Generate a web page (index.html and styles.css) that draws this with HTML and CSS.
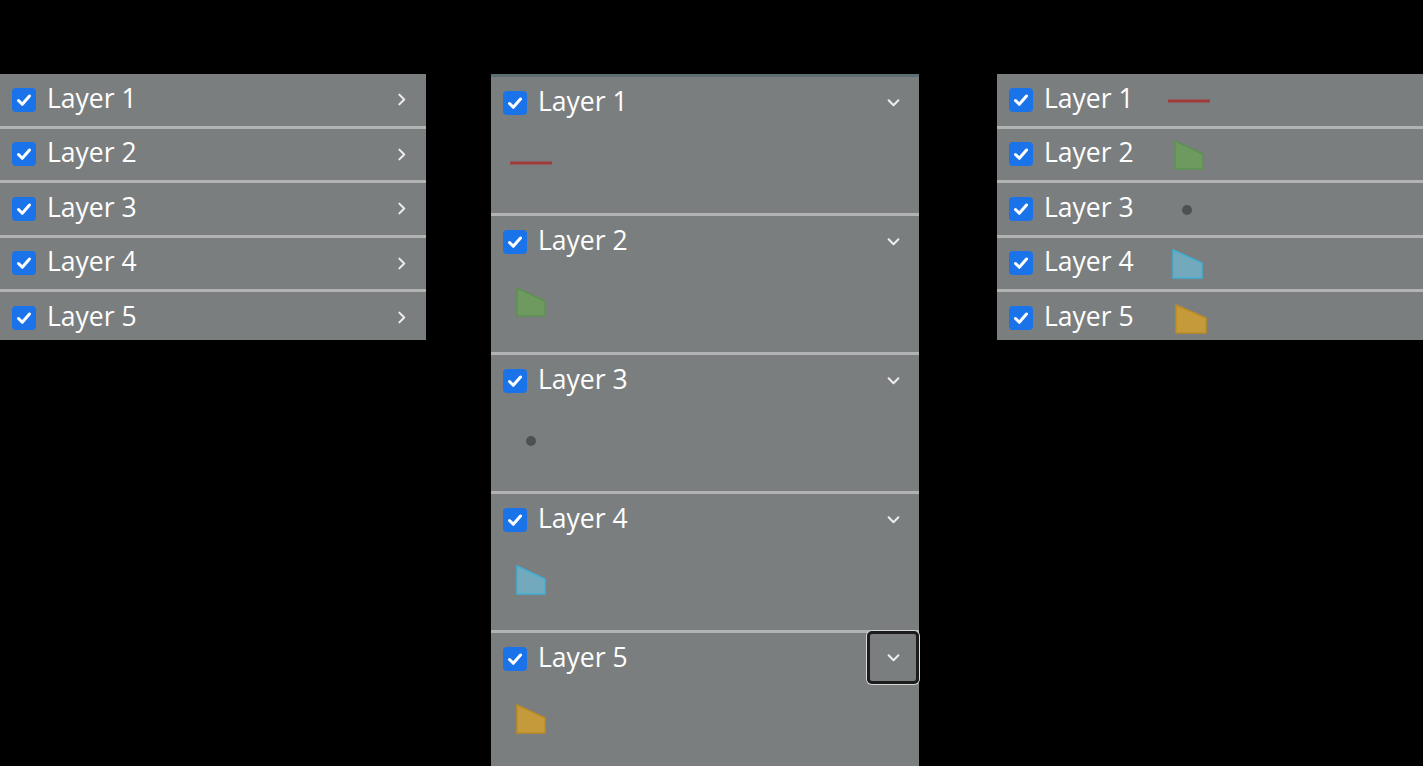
FILE: index.html
```html
<html lang="en">
<head>
  <meta charset="UTF-8">
  <title>Layer List</title>
  <link rel="stylesheet" href="styles.css">
</head>
<body>
  <div class="panels">

    <!-- collapsed list: names only -->
    <div class="layer-list compact">
      <div class="layer-row">
        <span class="check"><svg viewBox="0 0 24 24"><path d="M6.5 12.5l3.8 3.8 7.2-8.3"/></svg></span>
        <span class="layer-name">Layer 1</span>
        <button class="toggle"><svg viewBox="0 0 12 12"><path d="M4 1.5l4.5 4.5-4.5 4.5"/></svg></button>
      </div>
      <div class="layer-row">
        <span class="check"><svg viewBox="0 0 24 24"><path d="M6.5 12.5l3.8 3.8 7.2-8.3"/></svg></span>
        <span class="layer-name">Layer 2</span>
        <button class="toggle"><svg viewBox="0 0 12 12"><path d="M4 1.5l4.5 4.5-4.5 4.5"/></svg></button>
      </div>
      <div class="layer-row">
        <span class="check"><svg viewBox="0 0 24 24"><path d="M6.5 12.5l3.8 3.8 7.2-8.3"/></svg></span>
        <span class="layer-name">Layer 3</span>
        <button class="toggle"><svg viewBox="0 0 12 12"><path d="M4 1.5l4.5 4.5-4.5 4.5"/></svg></button>
      </div>
      <div class="layer-row">
        <span class="check"><svg viewBox="0 0 24 24"><path d="M6.5 12.5l3.8 3.8 7.2-8.3"/></svg></span>
        <span class="layer-name">Layer 4</span>
        <button class="toggle"><svg viewBox="0 0 12 12"><path d="M4 1.5l4.5 4.5-4.5 4.5"/></svg></button>
      </div>
      <div class="layer-row">
        <span class="check"><svg viewBox="0 0 24 24"><path d="M6.5 12.5l3.8 3.8 7.2-8.3"/></svg></span>
        <span class="layer-name">Layer 5</span>
        <button class="toggle"><svg viewBox="0 0 12 12"><path d="M4 1.5l4.5 4.5-4.5 4.5"/></svg></button>
      </div>
    </div>

    <!-- expanded list: legend under each layer -->
    <div class="layer-list expanded">
      <div class="layer-item">
        <div class="layer-row">
          <span class="check"><svg viewBox="0 0 24 24"><path d="M6.5 12.5l3.8 3.8 7.2-8.3"/></svg></span>
          <span class="layer-name">Layer 1</span>
          <button class="toggle"><svg viewBox="0 0 12 12"><path d="M1.5 4l4.5 4.5 4.5-4.5"/></svg></button>
        </div>
        <div class="legend">
          <svg class="swatch" viewBox="0 0 44 30"><line class="sym-line" x1="1" y1="15" x2="43" y2="15"/></svg>
        </div>
      </div>
      <div class="layer-item">
        <div class="layer-row">
          <span class="check"><svg viewBox="0 0 24 24"><path d="M6.5 12.5l3.8 3.8 7.2-8.3"/></svg></span>
          <span class="layer-name">Layer 2</span>
          <button class="toggle"><svg viewBox="0 0 12 12"><path d="M1.5 4l4.5 4.5 4.5-4.5"/></svg></button>
        </div>
        <div class="legend">
          <svg class="swatch" viewBox="0 0 44 30"><polygon class="sym-green" points="8,1 36,14 36,29 8,29"/></svg>
        </div>
      </div>
      <div class="layer-item">
        <div class="layer-row">
          <span class="check"><svg viewBox="0 0 24 24"><path d="M6.5 12.5l3.8 3.8 7.2-8.3"/></svg></span>
          <span class="layer-name">Layer 3</span>
          <button class="toggle"><svg viewBox="0 0 12 12"><path d="M1.5 4l4.5 4.5 4.5-4.5"/></svg></button>
        </div>
        <div class="legend">
          <svg class="swatch" viewBox="0 0 44 30"><circle class="sym-dot" cx="22" cy="15" r="5"/></svg>
        </div>
      </div>
      <div class="layer-item">
        <div class="layer-row">
          <span class="check"><svg viewBox="0 0 24 24"><path d="M6.5 12.5l3.8 3.8 7.2-8.3"/></svg></span>
          <span class="layer-name">Layer 4</span>
          <button class="toggle"><svg viewBox="0 0 12 12"><path d="M1.5 4l4.5 4.5 4.5-4.5"/></svg></button>
        </div>
        <div class="legend">
          <svg class="swatch" viewBox="0 0 44 30"><polygon class="sym-blue" points="8,1 36,14 36,29 8,29"/></svg>
        </div>
      </div>
      <div class="layer-item">
        <div class="layer-row">
          <span class="check"><svg viewBox="0 0 24 24"><path d="M6.5 12.5l3.8 3.8 7.2-8.3"/></svg></span>
          <span class="layer-name">Layer 5</span>
          <button class="toggle focused"><svg viewBox="0 0 12 12"><path d="M1.5 4l4.5 4.5 4.5-4.5"/></svg></button>
        </div>
        <div class="legend">
          <svg class="swatch" viewBox="0 0 44 30"><polygon class="sym-orange" points="8,1 36,14 36,29 8,29"/></svg>
        </div>
      </div>
    </div>

    <!-- inline legend list -->
    <div class="layer-list compact inline">
      <div class="layer-row">
        <span class="check"><svg viewBox="0 0 24 24"><path d="M6.5 12.5l3.8 3.8 7.2-8.3"/></svg></span>
        <span class="layer-name">Layer 1</span>
        <svg class="swatch" viewBox="0 0 44 30"><line class="sym-line" x1="1" y1="15" x2="43" y2="15"/></svg>
      </div>
      <div class="layer-row">
        <span class="check"><svg viewBox="0 0 24 24"><path d="M6.5 12.5l3.8 3.8 7.2-8.3"/></svg></span>
        <span class="layer-name">Layer 2</span>
        <svg class="swatch" viewBox="0 0 44 30"><polygon class="sym-green" points="8,1 36,14 36,29 8,29"/></svg>
      </div>
      <div class="layer-row">
        <span class="check"><svg viewBox="0 0 24 24"><path d="M6.5 12.5l3.8 3.8 7.2-8.3"/></svg></span>
        <span class="layer-name">Layer 3</span>
        <svg class="swatch" viewBox="0 0 44 30"><circle class="sym-dot" cx="20" cy="15" r="5"/></svg>
      </div>
      <div class="layer-row">
        <span class="check"><svg viewBox="0 0 24 24"><path d="M6.5 12.5l3.8 3.8 7.2-8.3"/></svg></span>
        <span class="layer-name">Layer 4</span>
        <svg class="swatch" viewBox="0 0 44 30"><polygon class="sym-blue" points="6,1 35,14 35,29 6,29"/></svg>
      </div>
      <div class="layer-row">
        <span class="check"><svg viewBox="0 0 24 24"><path d="M6.5 12.5l3.8 3.8 7.2-8.3"/></svg></span>
        <span class="layer-name">Layer 5</span>
        <svg class="swatch" viewBox="0 0 44 30"><polygon class="sym-orange" points="9,1 39,14 39,29 9,29"/></svg>
      </div>
    </div>

  </div>
</body>
</html>
```

FILE: styles.css
```css
/* Three layer list panels on a dark page */

body {
  margin: 0;
  background-color: #000;
  font-family: "Open Sans", "DejaVu Sans", sans-serif;
  color: #fff;
}

.panels {
  display: flex;
  align-items: flex-start;
  padding-top: 74px;
}

.layer-list {
  width: 426px;
  background-color: #7b7e7e;
}

.layer-list.compact {
  height: 266px;
  overflow: hidden;
}

.layer-list.expanded {
  width: 428px;
  margin: 0 78px 0 65px;
  border-top: 3px solid #5c6f75;
}

.layer-row {
  display: flex;
  align-items: center;
  height: 51.5px;
  padding-left: 12px;
}

.compact .layer-row + .layer-row,
.layer-item + .layer-item {
  border-top: 3px solid #b2b4b4;
}

.expanded .layer-row {
  height: 51px;
}

/* checkbox */
.check {
  width: 24px;
  height: 24px;
  flex: none;
  border-radius: 4px;
  background-color: #1a73e8;
}

.check svg {
  display: block;
  width: 24px;
  height: 24px;
}

.check path {
  fill: none;
  stroke: #fff;
  stroke-width: 3;
  stroke-linecap: round;
  stroke-linejoin: round;
}

.layer-name {
  margin-left: 11px;
  padding-bottom: 4px;
  font-size: 26.5px;
  line-height: 32px;
  flex: 1;
}

.inline .layer-name {
  flex: none;
  width: 123px;
}

/* expand / collapse button */
.toggle {
  width: 50px;
  height: 50px;
  padding: 0;
  border: none;
  background: none;
  display: flex;
  align-items: center;
  justify-content: center;
  cursor: pointer;
}

.expanded .toggle {
  width: 52px;
}

.toggle svg {
  width: 13px;
  height: 13px;
}

.toggle path {
  fill: none;
  stroke: #ececec;
  stroke-width: 1.9;
  stroke-linecap: round;
  stroke-linejoin: round;
}

.toggle.focused {
  height: 53px;
  margin-top: -2px;
  border: 3px solid #1c1c1c;
  border-radius: 5px;
  box-shadow: 0 0 0 1px #d6d8d8;
}

/* legend swatches */
.legend {
  height: 85px;
  padding: 20px 0 0 18px;
  box-sizing: border-box;
}

.swatch {
  display: block;
  width: 44px;
  height: 30px;
}

.inline .swatch {
  margin-top: 2px;
}

.sym-line {
  stroke: #a23a3a;
  stroke-width: 3;
}

.sym-green {
  fill: #6e9a5f;
  stroke: #5d9152;
  stroke-width: 1.5;
}

.sym-blue {
  fill: #72a9bd;
  stroke: #41b0d6;
  stroke-width: 1.5;
}

.sym-orange {
  fill: #c49a3a;
  stroke: #bd8c23;
  stroke-width: 1.5;
}

.sym-dot {
  fill: #4e5151;
}
```
